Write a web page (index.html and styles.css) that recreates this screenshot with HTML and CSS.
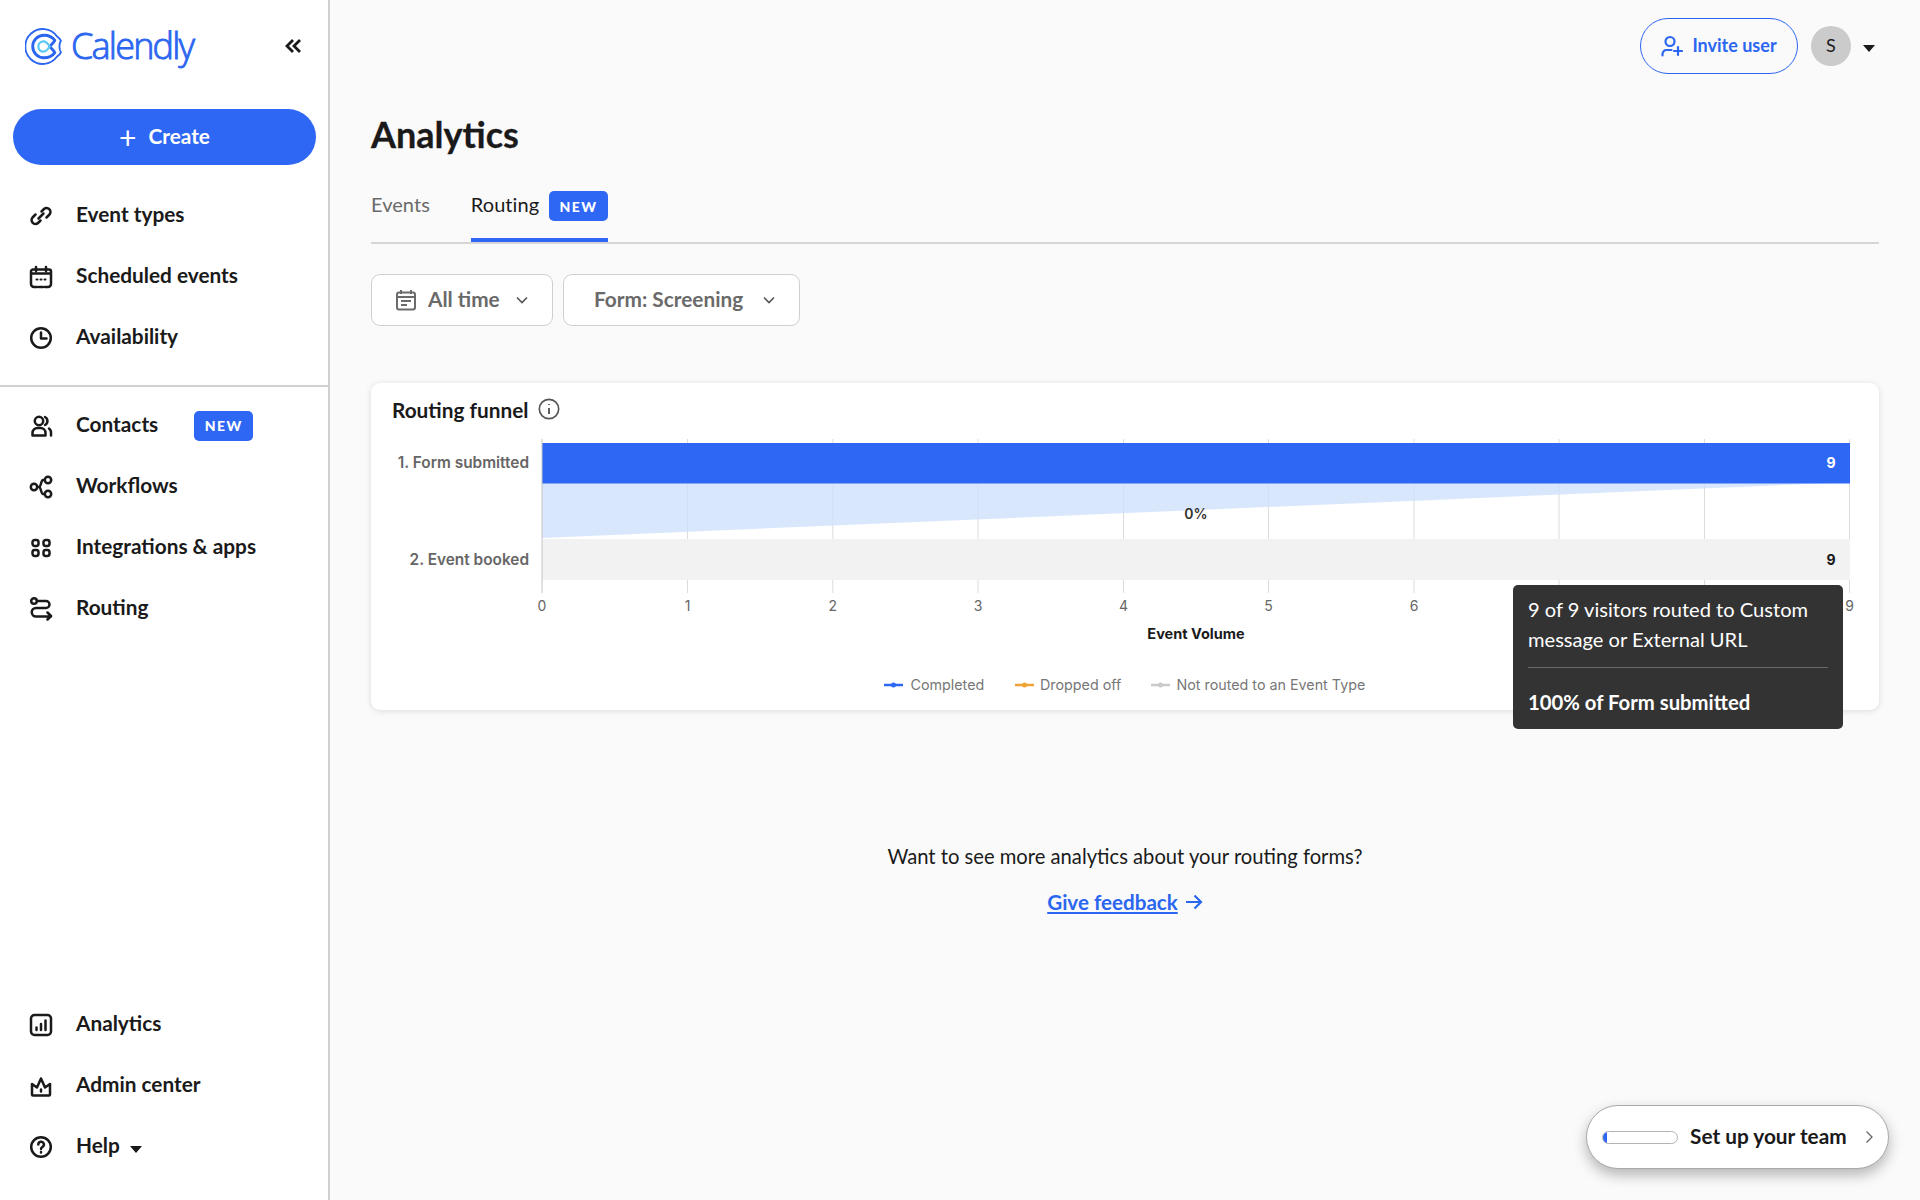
FILE: index.html
```html
<!DOCTYPE html>
<html lang="en">
<head>
<meta charset="utf-8">
<title>Analytics</title>
<link rel="stylesheet" href="styles.css">
</head>
<body>
<div class="app">
<aside class="sidebar">
  <div class="logo-row">
    <div class="logo">
      <svg class="logo-mark" viewBox="0 0 36 36" fill="none" stroke-linecap="round" stroke-linejoin="round">
        <path d="M31 8A17 17 0 1 0 31 28C33 26.500 34.500 25 35 23.500C33 21.500 33 14.500 35 12.500C34.500 11 33 9.500 31 8Z" stroke="#2b66f0" stroke-width="1.800"/>
        <path d="M29 12C26.500 8.500 22.500 7 18.500 7A11 11 0 0 0 18.500 29C22.500 29 26.500 27.500 29 24C27.500 21 25.500 20 24 18C25.500 16 27.500 15 29 12Z" stroke="#2b66f0" stroke-width="2.800"/>
        <path d="M24 18C22.500 15.500 20.500 13 18 13A5 5 0 0 0 18 23C20.500 23 22.500 20.500 24 18Z" stroke="#5cc8f5" stroke-width="2.200"/>
      </svg>
      <span class="logo-text">Calendly</span>
    </div>
    <svg class="collapse" viewBox="0 0 18 16" fill="none" stroke="#1a1a1a" stroke-width="2.800"><path d="M8 2 2 8l6 6M15 2 9 8l6 6"/></svg>
  </div>
  <button class="create"><span class="create-plus">+</span>Create</button>
  <nav class="nav nav-first">
    <a class="nav-row"><svg class="nav-icon" viewBox="0 0 24 24"><path d="M12.500 7.500 15 5a3.900 3.900 0 0 1 5.500 5.500L17.500 13.500"/><path d="M11.500 16.500 9 19a3.900 3.900 0 0 1-5.500-5.500L6.500 10.500"/><path d="M9.500 14.500l5-5"/></svg>Event types</a>
    <a class="nav-row"><svg class="nav-icon" viewBox="0 0 24 24"><path d="M7 2v4M17 2v4M2 8.500h20M8 22H5a3 3 0 0 1-3-3V6.500a2 2 0 0 1 2-2h16a2 2 0 0 1 2 2V19a3 3 0 0 1-3 3h-3M10 22h4"/><path class="thin" d="M7.500 14.500h1M11.500 14.500h1M15.500 14.500h1"/></svg>Scheduled events</a>
    <a class="nav-row"><svg class="nav-icon" viewBox="0 0 24 24"><circle cx="12" cy="12" r="9.800"/><path d="M12 6.500V12.500h5.500"/></svg>Availability</a>
  </nav>
  <div class="divider"></div>
  <nav class="nav nav-second">
    <a class="nav-row"><svg class="nav-icon" viewBox="0 0 24 24"><circle cx="10" cy="7" r="4.200"/><path d="M3.500 21.500v-2.500a5 5 0 0 1 5-5h3a5 5 0 0 1 5 5v2.500ZM16 3a4.500 4.500 0 0 1 0 8M20 14.500a5 5 0 0 1 2 4.500v2.500"/></svg>Contacts<span class="badge nav-badge">NEW</span></a>
    <a class="nav-row"><svg class="nav-icon" viewBox="0 0 24 24"><circle cx="5" cy="12" r="3.200"/><circle cx="19" cy="5" r="3.200"/><circle cx="19" cy="19" r="3.200"/><path d="M8.200 12H10c2 0 2-7 4-7h1.800M10 12c2 0 2 7 4 7h1.800"/></svg>Workflows</a>
    <a class="nav-row"><svg class="nav-icon" viewBox="0 0 24 24"><rect x="3.500" y="4" width="6" height="6" rx="2.200"/><rect x="14.500" y="4" width="6" height="6" rx="2.200"/><rect x="3.500" y="14" width="6" height="6" rx="2.200"/><rect x="14.500" y="14" width="6" height="6" rx="2.200"/></svg>Integrations &amp; apps</a>
    <a class="nav-row"><svg class="nav-icon" viewBox="0 0 24 24"><circle cx="5" cy="4" r="2.800"/><path d="M8 4h9a3.500 3.500 0 0 1 3.500 3.500v0a3.500 3.500 0 0 1-3.500 3.500H7a4 4 0 0 0 0 8.500h15M18.500 15.500l3.500 3.500-3.500 3.500"/></svg>Routing</a>
  </nav>
  <div class="nav-spacer"></div>
  <nav class="nav">
    <a class="nav-row"><svg class="nav-icon" viewBox="0 0 24 24"><rect x="2" y="2" width="20" height="20" rx="3.500"/><path d="M7.500 17v-2.500M12 17v-6M16.500 17V7.500"/></svg>Analytics</a>
    <a class="nav-row"><svg class="nav-icon" viewBox="0 0 24 24"><path d="M4 21.500h16a1 1 0 0 0 1-1V10l-5 3.500L12 4.500 8 13.500 3 10v10.500a1 1 0 0 0 1 1ZM12 15.500v2"/></svg>Admin center</a>
    <a class="nav-row"><svg class="nav-icon" viewBox="0 0 24 24"><circle cx="12" cy="12" r="9.800"/><path d="M9.300 9.500a2.800 2.800 0 1 1 4.200 2.400c-1 .6-1.500 1.100-1.500 2.100M12 17v.4"/></svg>Help<span class="caret help-caret"></span></a>
  </nav>
</aside>

<main class="main">
  <div class="topbar">
    <button class="invite"><svg class="invite-icon" viewBox="0 0 22 22" fill="none" stroke="#2b66f0" stroke-width="2.200" stroke-linecap="round"><circle cx="9" cy="6.500" r="4.500"/><path d="M1.500 20.500v-1.500a4 4 0 0 1 4-4h5M17 12v8M13 16h8"/></svg><span class="invite-label">Invite user</span></button>
    <div class="avatar">S</div>
    <span class="caret user-caret"></span>
  </div>
  <h1 class="title">Analytics</h1>
  <div class="tabs">
    <a class="tab"><span class="tab-label">Events</span></a>
    <a class="tab tab-active"><span class="tab-label">Routing</span><span class="badge">NEW</span></a>
  </div>
  <div class="filters">
    <button class="filter filter-time"><svg class="cal-icon" viewBox="0 0 20 22" fill="none" stroke="#6b6b6b" stroke-width="2"><path d="M5 1v4M15 1v4"/><rect x="1" y="3.500" width="18" height="17" rx="2"/><path d="M1 8h18M5 12h10M5 16h6"/></svg><span class="filter-label">All time</span><svg class="chev" viewBox="0 0 14 9" fill="none" stroke="#555" stroke-width="1.600"><path d="M2 1.500 7 6.500l5-5"/></svg></button>
    <button class="filter filter-form"><span class="filter-label">Form: Screening</span><svg class="chev" viewBox="0 0 14 9" fill="none" stroke="#555" stroke-width="1.600"><path d="M2 1.500 7 6.500l5-5"/></svg></button>
  </div>
  <section class="card">
    <div class="card-head">
      <span class="card-title">Routing funnel</span>
      <svg class="info" viewBox="0 0 20 20" fill="none" stroke="#555" stroke-width="1.500"><circle cx="10" cy="10" r="8.800"/><path d="M10 9v5.500" stroke-width="1.700"/><path d="M10 5.500v.8" stroke-width="1.900"/></svg>
    </div>
    <svg class="chart" viewBox="371 435 1508 274">
      <g stroke="#dcdcdc" stroke-width="1">
        <path d="M687.500 439V593M832.800 439V593M978 439V593M1123.500 439V593M1268.500 439V593M1414 439V593M1559 439V593M1704.500 439V593M1849.500 439V593"/>
      </g>
      <polygon points="542,483 1830,483 542,538" fill="#cfe1fb" fill-opacity=".8"/>
      <rect x="542" y="539" width="1308" height="41" fill="#f2f2f2"/>
      <rect x="542" y="443" width="1308" height="40.500" fill="#2f67f5"/>
      <path d="M542 439V593" stroke="#c4c4c4" stroke-width="1"/>
      <text class="c-cat" x="529" y="468" text-anchor="end">1. Form submitted</text>
      <text class="c-cat" x="529" y="564.500" text-anchor="end">2. Event booked</text>
      <text class="c-val c-white" x="1831" y="468" text-anchor="middle">9</text>
      <text class="c-val" x="1831" y="564.500" text-anchor="middle">9</text>
      <text class="c-pct" x="1196" y="519" text-anchor="middle">0%</text>
      <g class="c-tick" text-anchor="middle">
        <text x="542" y="611">0</text><text x="687.500" y="611">1</text><text x="832.800" y="611">2</text><text x="978" y="611">3</text><text x="1123.500" y="611">4</text><text x="1268.500" y="611">5</text><text x="1414" y="611">6</text><text x="1849.500" y="611">9</text>
      </g>
      <text class="c-axis" x="1196" y="639" text-anchor="middle">Event Volume</text>
      <g stroke-width="2.500">
        <path d="M884 685h19" stroke="#2f67f5"/><circle cx="893.500" cy="685" r="2.500" fill="#2f67f5"/>
        <path d="M1015 685h19" stroke="#eea334"/><circle cx="1024.500" cy="685" r="2.500" fill="#eea334"/>
        <path d="M1151 685h19" stroke="#c9c9c9"/><circle cx="1160.500" cy="685" r="2.500" fill="#c9c9c9"/>
      </g>
      <g class="c-leg">
        <text x="910.500" y="690">Completed</text>
        <text x="1040" y="690">Dropped off</text>
        <text x="1176.500" y="690">Not routed to an Event Type</text>
      </g>
    </svg>
    <div class="tooltip">
      <p class="tip-text">9 of 9 visitors routed to Custom message or External URL</p>
      <p class="tip-foot">100% of Form submitted</p>
    </div>
  </section>
  <div class="more">
    <p class="more-text">Want to see more analytics about your routing forms?</p>
    <a class="more-link"><span class="more-label">Give feedback</span><svg class="arrow" viewBox="0 0 18 16" fill="none" stroke="#2b66f0" stroke-width="2.200"><path d="M1 8h15M9.500 1.500 16 8l-6.500 6.500"/></svg></a>
  </div>
</main>
</div>
<div class="setup">
  <span class="progress"><span class="progress-fill"></span></span>
  <span class="setup-text">Set up your team</span>
  <svg class="setup-chev" viewBox="0 0 9 14" fill="none" stroke="#666" stroke-width="1.300"><path d="M1.500 1.500 7 7l-5.500 5.500"/></svg>
</div>
</body>
</html>
```
FILE: styles.css
```css
* { box-sizing: border-box; }
html, body { margin: 0; height: 100%; }
body { font-family: "Lato", "Liberation Sans", sans-serif; color: #1a1a1a; background: #fafafa; overflow: hidden; position: relative; }
.app { display: flex; height: 1200px; }

.sidebar { width: 330px; flex: none; height: 1200px; background: #fff; border-right: 2px solid #d0d0d0; display: flex; flex-direction: column; padding-bottom: 23px; }
.logo-row { height: 92px; display: flex; align-items: center; justify-content: space-between; padding: 0 25px 0 25px; flex: none; }
.logo { display: flex; align-items: center; gap: 9px; }
.logo-mark { width: 37px; height: 37px; }
.logo-text { font-family: "Open Sans", sans-serif; font-size: 36px; font-weight: 300; color: #2b66f0; letter-spacing: -1.800px; line-height: 40px; -webkit-text-stroke: .9px #2b66f0; }
.collapse { width: 18px; height: 16px; }
.create { flex: none; margin: 17px 0 0 13px; width: 303px; height: 56px; border: 0; border-radius: 28px; background: #2f67f5; color: #fff; font: 700 20.800px "Lato", sans-serif; display: flex; align-items: center; justify-content: center; gap: 12px; padding: 0 0 3px; }
.create-plus { font-size: 30px; font-weight: 400; line-height: 30px; position: relative; top: 1px; }
.nav { display: flex; flex-direction: column; }
.nav-first { margin-top: 20px; }
.nav-second { margin-top: 8px; }
.nav-spacer { flex: 1; }
.nav-row { height: 61px; display: flex; align-items: center; padding: 0 0 4px 29px; font-size: 20.800px; font-weight: 700; color: #1a1a1a; }
.nav-icon { width: 24px; height: 24px; margin: 4px 23px 0 0; fill: none; stroke: #1a1a1a; stroke-width: 2.500; stroke-linecap: round; stroke-linejoin: round; flex: none; }
.nav-icon .thin { stroke-width: 2; }
.divider { height: 2px; background: #d0d0d0; margin-top: 17px; flex: none; }
.badge { display: inline-flex; align-items: center; justify-content: center; width: 59px; height: 30px; border-radius: 5px; background: #2f67f5; color: #fff; font-size: 14px; font-weight: 900; letter-spacing: 1.500px; margin-left: 10px; }
.nav-badge { margin: 4px 0 0 36px; }
.caret { display: inline-block; width: 0; height: 0; border-left: 6.500px solid transparent; border-right: 6.500px solid transparent; border-top: 7px solid #1a1a1a; }
.help-caret { margin-left: 10px; margin-top: 9px; }

.main { flex: 1; min-width: 0; padding: 18px 41px 0 41px; display: flex; flex-direction: column; }
.topbar { height: 55px; display: flex; align-items: center; justify-content: flex-end; padding-right: 4px; flex: none; }
.invite { width: 158px; height: 56px; border: 1.500px solid #2b66f0; border-radius: 28px; background: transparent; color: #2b66f0; font: 700 18px "Lato", sans-serif; display: flex; align-items: center; justify-content: center; gap: 9px; padding: 0; }
.invite-label { padding-bottom: 2px; }
.invite-icon { width: 22px; height: 22px; }
.avatar { width: 40px; height: 40px; border-radius: 50%; background: #cbcbcb; display: flex; align-items: center; justify-content: center; font-size: 18px; margin-left: 13px; padding-bottom: 2px; }
.user-caret { margin-left: 12px; margin-top: 6px; }
.title { margin: 41px 0 0; font-size: 36px; font-weight: 700; line-height: 40px; color: #1a1a1a; -webkit-text-stroke: .3px #1a1a1a; }
.tabs { display: flex; gap: 41px; height: 64px; margin-top: 26px; padding-top: 11px; border-bottom: 2px solid #d6d6d6; flex: none; }
.tab { height: 51px; padding-bottom: 17px; display: flex; align-items: center; font-size: 20px; color: #6a6a6a; border-bottom: 4px solid transparent; }
.tab-label { padding-bottom: 4px; letter-spacing: .05px; }
.tab-active { color: #1a1a1a; border-bottom-color: #2f67f5; }
.filters { display: flex; gap: 10px; margin-top: 30px; flex: none; }
.filter { height: 52px; background: #fff; border: 1.500px solid #cfcfcf; border-radius: 9px; color: #6a6a6a; font: 700 20.800px "Lato", sans-serif; display: flex; align-items: center; padding: 0; }
.filter-label { padding-bottom: 4px; }
.filter-time { width: 182px; padding-left: 24px; }
.filter-form { width: 237px; padding-left: 30px; }
.cal-icon { width: 20px; height: 22px; margin-right: 12px; }
.chev { width: 14px; height: 9px; margin-left: auto; margin-right: 23px; }
.card { position: relative; margin-top: 57px; height: 327px; background: #fff; border-radius: 9px; box-shadow: 0 1px 6px rgba(0,0,0,.13); flex: none; }
.card-head { height: 52px; display: flex; align-items: center; padding-left: 21px; gap: 10px; }
.card-title { font-size: 20.800px; font-weight: 700; }
.info { width: 22px; height: 22px; }
.chart { display: block; width: 1508px; height: 274px; }
.c-cat, .c-pct, .c-val, .c-tick, .c-axis, .c-leg { font-family: "Inter", "Liberation Sans", sans-serif; }
.c-cat { font-size: 15.400px; font-weight: 600; fill: #666; }
.c-val { font-size: 14px; font-weight: 700; fill: #1a1a1a; }
.c-white { fill: #fff; }
.c-pct { font-size: 14px; font-weight: 600; fill: #333; }
.c-tick { font-size: 14px; fill: #666; }
.c-axis { font-size: 14.500px; font-weight: 700; fill: #1a1a1a; }
.c-leg { font-size: 14.300px; fill: #777; }
.tooltip { position: absolute; left: 1142px; top: 202px; width: 330px; height: 144px; background: #333; border-radius: 5px; color: #fff; padding: 9px 15px 0; }
.tip-text { margin: 0; font-size: 20.100px; line-height: 30px; padding-bottom: 13px; border-bottom: 1px solid #6a6a6a; }
.tip-foot { margin: 22px 0 0; font-size: 20.300px; line-height: 24px; font-weight: 700; }
.more { margin-top: 134px; display: flex; flex-direction: column; align-items: center; gap: 22px; }
.more-text { margin: 0; font-size: 20.200px; line-height: 24px; color: #1a1a1a; }
.more-link { display: flex; align-items: center; gap: 7px; color: #2b66f0; font-size: 20.600px; font-weight: 700; line-height: 24px; }
.more-label { text-decoration: underline; }
.arrow { width: 18px; height: 16px; }
.setup { position: absolute; left: 1586px; top: 1105px; width: 303px; height: 64px; background: #fff; border: 1px solid #aaa; border-radius: 32px; box-shadow: 0 6px 14px rgba(0,0,0,.28); display: flex; align-items: center; padding-left: 15px; }
.progress { width: 76px; height: 13px; border: 1px solid #b4b4b4; border-radius: 7px; overflow: hidden; flex: none; display: block; }
.progress-fill { display: block; width: 4px; height: 100%; background: #2f67f5; }
.setup-text { margin-left: 12px; font-size: 20.800px; font-weight: 700; padding-bottom: 4px; }
.setup-chev { width: 9px; height: 14px; margin-left: 18px; }
```
